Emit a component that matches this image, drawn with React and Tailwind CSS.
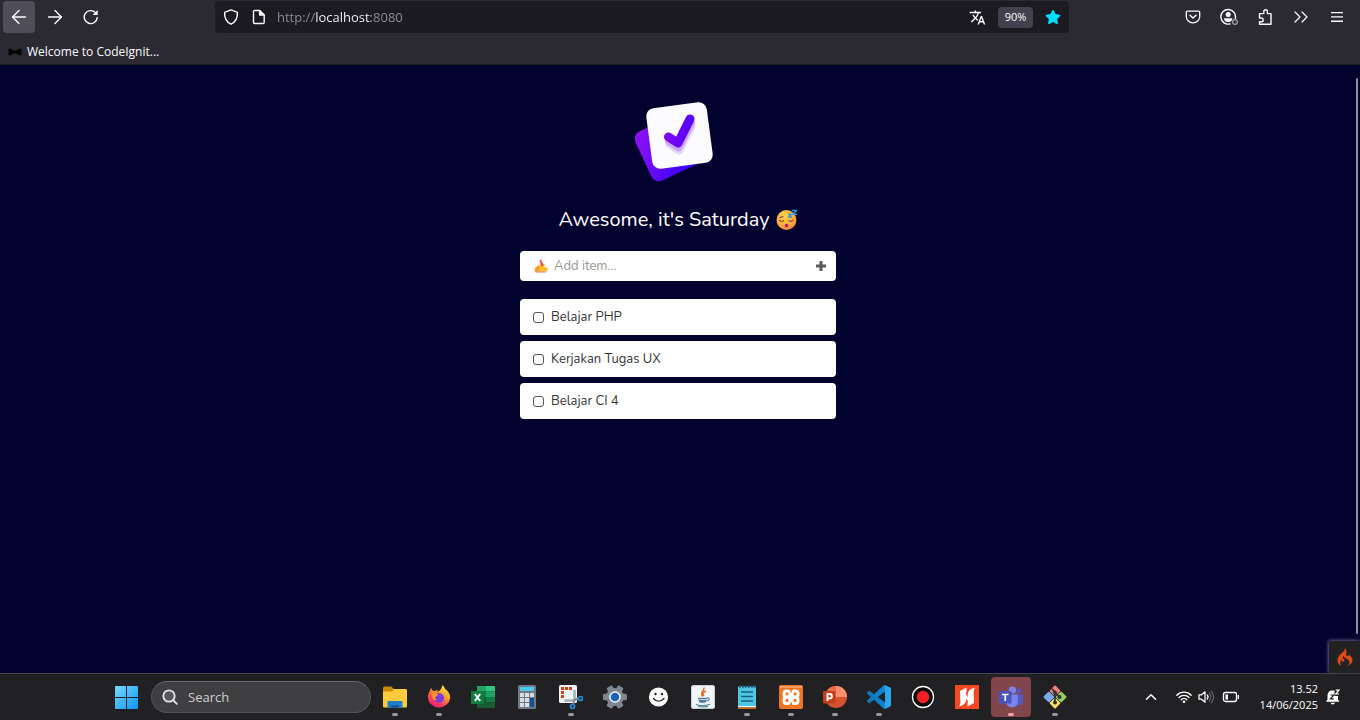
import { ArrowLeft, ArrowRight, ChevronsRight, ChevronUp } from "lucide-react";
import { FaStar } from "react-icons/fa6";
import { MdTranslate } from "react-icons/md";
import { SiCodeigniter } from "react-icons/si";

const line = { fill: "none", stroke: "currentColor", strokeLinecap: "round", strokeLinejoin: "round" };

function ToolButton({ label, active, children }) {
  return (
    <button
      type="button"
      aria-label={label}
      className={`flex size-8 shrink-0 items-center justify-center rounded text-[#fbfbfe] ${active ? "bg-[#4f4e58]" : "hover:bg-[#4f4e58]"}`}
    >
      {children}
    </button>
  );
}

function ReloadIcon() {
  return (
    <svg viewBox="0 0 16 16" className="size-4" {...line} strokeWidth="1.4">
      <path d="M14.2 8.6A6.5 6.5 0 1 1 12.4 3.6" />
      <path d="M14.6 1v5h-5z" fill="currentColor" stroke="none" />
    </svg>
  );
}

function ShieldIcon() {
  return (
    <svg viewBox="0 0 16 16" className="size-4" {...line} strokeWidth="1.4">
      <path d="M8 .9 14.4 3.3c.3 4.6-.6 9.2-6.4 11.9C2.2 12.5 1.3 7.9 1.6 3.3z" />
    </svg>
  );
}

function PageIcon() {
  return (
    <svg viewBox="0 0 16 16" className="size-4" {...line} strokeWidth="1.4">
      <path d="M3.5 1.5h5.3l4.400 4.400v7.400a1.200 1.200 0 0 1-1.200 1.200H3.700a1.200 1.200 0 0 1-1.200-1.200V2.500a1 1 0 0 1 1-1z" />
      <path d="M8.6 1.7v4.400H13z" fill="currentColor" />
    </svg>
  );
}

function PocketIcon() {
  return (
    <svg viewBox="0 0 16 16" className="size-4" {...line} strokeWidth="1.3">
      <path d="M2.5 2.200h11a1.200 1.200 0 0 1 1.200 1.200v4.100a6.700 6.300 0 0 1-13.400 0V3.400a1.200 1.200 0 0 1 1.200-1.200z" />
      <path d="M5 6.300 8 9l3-2.700" strokeWidth="1.5" />
    </svg>
  );
}

function AccountIcon() {
  return (
    <svg viewBox="0 0 18 18" className="size-[18px]" {...line} strokeWidth="1.4">
      <path d="M10 15.900A7.300 7.300 0 1 1 15.300 10.400" />
      <circle cx="8.2" cy="6.6" r="2.5" fill="currentColor" stroke="none" />
      <path d="M4 10.300h8.400c0 2-1.400 3.800-4.200 3.800S4 12.300 4 10.300z" fill="currentColor" stroke="none" />
      <circle cx="15" cy="14" r="2.3" stroke="#a5a4ad" strokeWidth="1.3" />
    </svg>
  );
}

function PuzzleIcon() {
  return (
    <svg viewBox="0 0 16 18" className="h-[18px] w-4" {...line} strokeWidth="1.4">
      <path d="M2.5 7.500V5.600h4.300V3.500a1.800 1.800 0 0 1 3.600 0v2.100h3.600v10.600H2.500v-2.400h1.800a1.900 1.900 0 0 0 0-3.800H2.500z" />
    </svg>
  );
}

function MenuIcon() {
  return (
    <svg viewBox="0 0 16 16" className="size-4" fill="currentColor">
      <path d="M2 3h12v1.300H2zM2 7.300h12v1.300H2zM2 11.600h12v1.300H2z" />
    </svg>
  );
}

function BowTieIcon() {
  return (
    <svg viewBox="0 0 14 8" className="h-2 w-[14px]" fill="#050505">
      <path d="M.4 1.500C.6.400 2 .4 3 .9l3 1.500h2l3-1.500c1-.5 2.400-.5 2.600.6v5c-.2 1.100-1.600 1.100-2.600.6L8 5.600H6L3 7.100c-1 .5-2.400.5-2.600-.6z" />
    </svg>
  );
}

function TodoLogo() {
  return (
    <svg viewBox="632 98 92 86" className="h-[86px] w-[92px]" role="img" aria-label="Todo logo">
      <defs>
        <linearGradient id="back" x1="0" y1="0" x2="1" y2="1">
          <stop offset="0" stopColor="#9812f5" />
          <stop offset="1" stopColor="#2500ff" />
        </linearGradient>
        <linearGradient id="tick" x1="0" y1="0" x2="1" y2="0">
          <stop offset="0" stopColor="#7a08ee" />
          <stop offset="1" stopColor="#5800ff" />
        </linearGradient>
      </defs>
      <rect x="641" y="121" width="54" height="54" rx="8" fill="url(#back)" transform="rotate(-25 668 148)" />
      <rect x="649" y="105" width="61" height="61" rx="8" fill="#fcfbfe" transform="rotate(-7.5 679.5 135.5)" />
      <g fill="none" strokeWidth="9" strokeLinecap="round" strokeLinejoin="round">
        <path d="m670 144 9 6 12-24" stroke="#e6d6fd" />
        <path d="m669.500 141 9 6 12-24" stroke="#c9a9fa" />
        <path d="m668.500 137 9.500 6 12-24" stroke="url(#tick)" />
      </g>
    </svg>
  );
}

function SleepyFace() {
  return (
    <svg viewBox="0 0 22 22" className="size-[22px]" role="img" aria-label="Sleeping face">
      <defs>
        <radialGradient id="face" cx=".4" cy=".3" r=".75">
          <stop offset="0" stopColor="#ffd24a" />
          <stop offset=".7" stopColor="#fba63a" />
          <stop offset="1" stopColor="#f2784b" />
        </radialGradient>
      </defs>
      <circle cx="10.5" cy="11" r="10" fill="url(#face)" />
      <g fill="none" stroke="#51313a" strokeWidth="1" strokeLinecap="round">
        <path d="M3.500 11.500q2 1.800 4.200.4M12.800 11.900q2.200 1.400 4.200-.4M4 8.500l3-.8" />
      </g>
      <ellipse cx="10.5" cy="16.5" rx="1.7" ry="1.8" fill="#b5126b" />
      <path d="M12 5.500h3.500l-3 2.500h3.500M16 1.500h4.800l-4 3.700h4.400" fill="none" stroke="#2d9be8" strokeWidth="1.400" strokeLinejoin="round" />
    </svg>
  );
}

function WritingHand() {
  return (
    <svg viewBox="0 0 14 14" className="size-[14px] shrink-0" aria-hidden="true">
      <path d="M2 8.500 6.500 5.500 10 4.800c1.300-.2 1.500 1 .5 1.600L8.800 7.600l4 .9c1.500.6 1.300 3.300-.5 3.900H5C2.500 12.400 1 10 2 8.500z" fill="#fbc02d" />
      <path d="M.4 11.500c.6-2.500 2-4.300 4.600-5.400l.5 3.700L4 12.800H1z" fill="#f9a02f" />
      <path d="m5.500 1 1.500-.5 2.600 5.300-.6 2.300-2-1z" fill="#f0554b" />
      <path d="M2 13h9.500" stroke="#f06a52" strokeWidth="1" strokeLinecap="round" />
    </svg>
  );
}

function WindowsIcon() {
  return (
    <svg viewBox="0 0 24 24" className="size-6">
      <defs>
        <linearGradient id="win" gradientUnits="userSpaceOnUse" x1="0" y1="0" x2="24" y2="24">
          <stop offset="0" stopColor="#7fdcff" />
          <stop offset="1" stopColor="#0a94f2" />
        </linearGradient>
      </defs>
      <path fill="url(#win)" d="M2 1H12V12H1V2a1 1 0 0 1 1-1zM13 1h10a1 1 0 0 1 1 1v10H13zM1 13h11v11H2a1 1 0 0 1-1-1zM13 13h11v10a1 1 0 0 1-1 1H13z" />
    </svg>
  );
}

function FolderArt() {
  return (
    <>
      <path d="M0 3.200C0 2 .8 1.500 1.800 1.500h6.500l2.500 2.500H22v5H0z" fill="#c98a0a" />
      <path d="M0 6.500h9l2-2.500h11.500c1 0 1.500.5 1.500 1.500v15.500c0 1-.5 1.500-1.500 1.500h-21C.5 22.500 0 22 0 21z" fill="#fdcb3b" />
      <path d="M4.500 22.500v-5c0-1 .8-1.500 1.800-1.500h11.400c1 0 1.800.5 1.800 1.500v5z" fill="#1b7fcc" />
      <path d="M8 22.500v-1.200c0-.6.400-.8 1-.8h6c.6 0 1 .2 1 .8v1.200z" fill="#0c4f8f" />
    </>
  );
}

function FirefoxArt() {
  return (
    <>
      <defs>
        <linearGradient id="fox" x1=".8" y1="0" x2=".2" y2="1">
          <stop offset="0" stopColor="#fff04a" />
          <stop offset=".4" stopColor="#ff9a27" />
          <stop offset=".7" stopColor="#ff4052" />
          <stop offset="1" stopColor="#e81783" />
        </linearGradient>
      </defs>
      <path d="M15.500 0c2 2 2.500 3.500 3 4.500 1-.3 1 .4 1 .4 2.500 2.100 3.700 5 3.700 8.100A11.300 11 0 0 1 .8 13c0-3 .8-5.500 2.400-7.500 0-1 .3-2 .8-2.500l1.500 2.500c1 0 2 .2 2.700.7 1-1.200 2-1.600 2.800-1.700-.8 1-1 2-.7 2.500C12.500 6 14.500 4.500 15.500 0z" fill="url(#fox)" />
      <circle cx="12" cy="13" r="5" fill="#7a3bdc" />
      <path d="M4.500 8c2 .8 3.500 1.200 7 1-.7 1.700-2.700 2-3.200 3.300-.4 1.500.6 2.500 2.200 2.700-2.500 1-4.700-.2-5.300-2.200z" fill="#ff9330" />
    </>
  );
}

function ExcelArt() {
  return (
    <>
      <path d="M6 1h9v5.500H6z" fill="#21a366" /><path d="M15 1h8q1 0 1 1v4.500h-9z" fill="#33c481" />
      <path d="M6 6.500h9V12H6z" fill="#107c41" /><path d="M15 6.500h9V12h-9z" fill="#21a366" />
      <path d="M6 12h9v5.500H6z" fill="#185c37" /><path d="M15 12h9v5.500h-9z" fill="#107c41" />
      <path d="M6 17.500h18V22q0 1-1 1H7q-1 0-1-1z" fill="#185c37" />
      <rect y="6" width="13" height="13" rx="1" fill="#107c41" />
      <path d="m3.800 9 5.400 7M9.200 9l-5.400 7" stroke="#fff" strokeWidth="2" />
    </>
  );
}

function CalculatorArt() {
  return (
    <>
      <rect x="3" y="0" width="18" height="24" rx="1.5" fill="#717b86" />
      <rect x="5" y="2" width="14" height="4" rx=".5" fill="#4cc8f5" />
      {[8, 13, 18].map((y) => (
        <g key={y} fill="#d7dde3">
          <rect x="5" y={y} width="4" height="4" /><rect x="10" y={y} width="4" height="4" />
        </g>
      ))}
      <rect x="15" y="8" width="4" height="4" fill="#d7dde3" />
      <rect x="15" y="13" width="4" height="9" fill="#164f96" />
    </>
  );
}

function SnippingArt() {
  return (
    <>
      <rect x="0" y="0" width="18" height="18" rx="1.5" fill="#f2f4f6" />
      <path d="M2 2h3v3H2zM6 2h3v3H6zM10 2h3v3h-3zM2 6h3v3H2zM2 10h3v3H2z" fill="#dd3c16" />
      <path d="M15.500 5v11M5.500 15.500H16" fill="none" stroke="#a4adb6" strokeWidth="2.5" />
      <path d="m14 19 1.500-4 4-1.500" fill="none" stroke="#7f8b96" strokeWidth="2" />
      <circle cx="21.5" cy="13.5" r="2" fill="none" stroke="#1a90dc" strokeWidth="1.7" />
      <circle cx="13.5" cy="21.5" r="2" fill="none" stroke="#1a90dc" strokeWidth="1.7" />
    </>
  );
}

function SettingsArt() {
  return (
    <>
      <g fill="#7d8791">
        {[30, 90, 150].map((a) => (
          <rect key={a} x="8.8" y="0" width="6.4" height="24" rx="1.5" transform={`rotate(${a} 12 12)`} />
        ))}
        <circle cx="12" cy="12" r="9" />
      </g>
      <circle cx="12" cy="12" r="5.8" fill="#f3f5f7" />
      <circle cx="12" cy="12" r="4.3" fill="#1566b4" />
    </>
  );
}

function SmileArt() {
  return (
    <>
      <circle cx="11.5" cy="12" r="9.6" fill="#f7f7f7" />
      <circle cx="8.5" cy="9" r="1.2" fill="#222" /><circle cx="15" cy="9" r="1.2" fill="#222" />
      <path d="M6.500 13.500q5 5.500 10.500 0" fill="none" stroke="#222" strokeWidth="1.2" strokeLinecap="round" />
    </>
  );
}

function JavaArt() {
  return (
    <>
      <rect width="24" height="24" rx="3" fill="#f3f6f8" />
      <rect x=".5" y=".5" width="23" height="23" rx="3" fill="none" stroke="#c3ced6" />
      <path d="M12.800 2.500c1.800 3-4.800 4.700-1.200 9M15 6c-3.500 1.500-4 2.800-2 5" fill="none" stroke="#ea6a1f" strokeWidth="1.5" />
      <path d="M7 12.800h9l-1 4.200c-1.500 1.200-5.500 1.200-7 0z" fill="#557f9b" />
      <path d="M16 13c3-.8 3 2.500-.5 3M5 19.500c3 1.500 10 1.500 14-.3M7 21.500c3 .6 7 .6 10-.2" fill="none" stroke="#557f9b" strokeWidth="1.2" />
      <path d="M8 14.500h7" stroke="#dce7ee" strokeWidth=".8" />
    </>
  );
}

function NotepadArt() {
  return (
    <>
      <path d="M3 1.500h18V21H3z" fill="#4fc5de" />
      <path d="M3 21h18v1.500H3z" fill="#f5f5f5" /><path d="M3 22.500h18V24H3z" fill="#c96a17" />
      <path d="M5 0v3M8 0v3M11 0v3M14 0v3M17 0v3M20 0v3" stroke="#155b78" strokeWidth="1.2" />
      <path d="M6 7h12M6 11.500h12M6 16h12" stroke="#126481" strokeWidth="1.4" />
    </>
  );
}

function XamppArt() {
  return (
    <>
      <rect width="24" height="24" rx="2" fill="#ee7623" />
      <path d="M1 1h22v2H1z" fill="#f59a5c" />
      <g fill="none" stroke="#fff" strokeWidth="3">
        <rect x="5" y="6" width="6" height="6" rx="2.5" />
        <rect x="13" y="6" width="6" height="6" rx="2.5" />
        <rect x="5" y="12.5" width="6" height="6" rx="2.5" />
        <rect x="13" y="12.5" width="6" height="6" rx="2.5" />
      </g>
      <path d="M8 10.500h8v3.500H8z" fill="#fff" />
      <path d="M12 3v4.500M12 17v4.500" stroke="#ee7623" strokeWidth="1.4" />
    </>
  );
}

function PowerPointArt() {
  return (
    <>
      <circle cx="13" cy="12" r="11" fill="#d35230" />
      <path d="M13 1a11 11 0 0 0-11 11h11z" fill="#ed6c47" /><path d="M13 1a11 11 0 0 1 11 11H13z" fill="#ff8f6b" />
      <rect y="6" width="12.5" height="12.5" rx="1" fill="#c43e1c" />
      <path d="M4.500 16V9h2.200a2.100 2.100 0 0 1 0 4.400H4.500" fill="none" stroke="#fff" strokeWidth="1.9" />
    </>
  );
}

function CodeArt() {
  return (
    <>
      <defs>
        <linearGradient id="code" x1="0" y1="0" x2="1" y2="0">
          <stop offset="0" stopColor="#0d78bd" />
          <stop offset=".72" stopColor="#0f85ce" />
          <stop offset=".76" stopColor="#2ba4ee" />
          <stop offset="1" stopColor="#2fa8f2" />
        </linearGradient>
      </defs>
      <path
        fill="url(#code)"
        d="M23.150 2.587L18.210.210a1.494 1.494 0 0 0-1.705.290l-9.460 8.630-4.120-3.128a.999.999 0 0 0-1.276.057L.327 7.261A1 1 0 0 0 .326 8.740L3.899 12 .326 15.260a1 1 0 0 0 .001 1.479L1.650 17.940a.999.999 0 0 0 1.276.057l4.120-3.128 9.460 8.630a1.492 1.492 0 0 0 1.704.290l4.942-2.377A1.500 1.500 0 0 0 24 20.060V3.939a1.500 1.500 0 0 0-.850-1.352zm-5.146 14.861L10.826 12l7.178-5.448v10.896z"
      />
    </>
  );
}

function RecordArt() {
  return (
    <>
      <circle cx="12" cy="12" r="10.5" fill="#070707" stroke="#fff" strokeWidth="1.3" />
      <circle cx="12" cy="12" r="6.2" fill="#f32222" />
    </>
  );
}

function NitroArt() {
  return (
    <>
      <path d="M0 0h24v24H0z" fill="#f4481f" />
      <path d="M5 6 11.500 2.500c.8 3-.8 5.500-.5 8 .2 1.500.5 3 .3 4.500-.3 3-3 5.500-7.300 6.500 1.500-2.500 1.500-4.500 1.300-7z" fill="#fff" />
      <path d="M20 2.500c-4 .8-7 3.500-7.300 6.500-.2 1.500.1 3 .3 4.500.3 2.500-.8 5-.5 8L19 18l-.3-8.500c-.2-2.500-.2-4.500 1.300-7z" fill="#fff" />
      <path d="m9 9 5.500 7" stroke="#fff" strokeWidth="2.5" />
    </>
  );
}

function TeamsArt() {
  return (
    <>
      <circle cx="13.5" cy="5" r="3.6" fill="#7b83eb" /><circle cx="20" cy="6" r="2.4" fill="#5059c9" />
      <path d="M16 9.500h7q1 0 1 1v5.500a4.500 4.500 0 0 1-8 2.500z" fill="#5059c9" />
      <path d="M8 9.500h10q1 0 1 1v6a6 6 0 0 1-12 0z" fill="#7b83eb" />
      <rect y="6" width="12.5" height="12.5" rx="1" fill="#4b53bc" />
      <path d="M3 9.500h6.500M6.250 9.500V16" stroke="#fff" strokeWidth="1.7" />
    </>
  );
}

function GitArt() {
  return (
    <>
      <g transform="rotate(45 12 12)">
        <rect x="3.6" y="3.6" width="8.1" height="8.1" rx="1" fill="#f47c7c" /><rect x="12.3" y="3.6" width="8.1" height="8.1" rx="1" fill="#8ed160" />
        <rect x="3.6" y="12.3" width="8.1" height="8.1" rx="1" fill="#7aa9ee" /><rect x="12.3" y="12.3" width="8.1" height="8.1" rx="1" fill="#fbe071" />
      </g>
      <path d="M8.500 3.500 12 7v11M12 7.500l4.500 4.500" fill="none" stroke="#30312d" strokeWidth="1.7" />
      <g fill="#30312d"><circle cx="12" cy="7.5" r="1.9" /><circle cx="12" cy="17.5" r="2" /><circle cx="16.5" cy="12" r="2" /></g>
    </>
  );
}

const apps = [
  { name: "File Explorer", Art: FolderArt, open: true },
  { name: "Firefox", Art: FirefoxArt, open: true },
  { name: "Excel", Art: ExcelArt },
  { name: "Calculator", Art: CalculatorArt },
  { name: "Snipping Tool", Art: SnippingArt, open: true },
  { name: "Settings", Art: SettingsArt },
  { name: "Smile", Art: SmileArt },
  { name: "Java", Art: JavaArt },
  { name: "Notepad", Art: NotepadArt, open: true },
  { name: "XAMPP", Art: XamppArt, open: true },
  { name: "PowerPoint", Art: PowerPointArt, open: true },
  { name: "Visual Studio Code", Art: CodeArt, open: true },
  { name: "Recorder", Art: RecordArt },
  { name: "Nitro", Art: NitroArt },
  { name: "Teams", Art: TeamsArt, open: true, alert: true },
  { name: "Git", Art: GitArt, open: true },
];

function BrowserChrome() {
  return (
    <header className="border-b border-[#1b1a21] bg-[#2b2a33] font-['Open_Sans',sans-serif] text-[#fbfbfe]">
      <div className="flex items-center pt-px pr-[7px] pl-[3px]">
        <nav className="flex gap-1" aria-label="History">
          <ToolButton label="Back" active><ArrowLeft size={22} strokeWidth={1.5} /></ToolButton>
          <ToolButton label="Forward"><ArrowRight size={22} strokeWidth={1.5} /></ToolButton>
          <ToolButton label="Reload"><ReloadIcon /></ToolButton>
        </nav>
        <div className="mx-[108px] flex h-8 flex-1 items-center rounded bg-[#1c1b22] px-2">
          <ShieldIcon />
          <span className="ml-3"><PageIcon /></span>
          <input
            aria-label="Address"
            defaultValue="http://localhost:8080"
            className="ml-2.5 min-w-0 flex-1 bg-[linear-gradient(90deg,#8f8f98_39px,#fbfbfe_39px,#fbfbfe_94px,#8f8f98_94px)] bg-clip-text pt-0.5 text-[13px] text-transparent outline-none"
          />
          <button type="button" aria-label="Translate"><MdTranslate size={17} /></button>
          <button type="button" className="mx-3 h-[21px] w-[35px] rounded-sm bg-[#42414d] text-[11px]">90%</button>
          <button type="button" aria-label="Bookmark"><FaStar size={16} className="text-[#00ddff]" /></button>
        </div>
        <div className="flex gap-1">
          <ToolButton label="Pocket"><PocketIcon /></ToolButton>
          <ToolButton label="Account"><AccountIcon /></ToolButton>
          <ToolButton label="Extensions"><PuzzleIcon /></ToolButton>
          <ToolButton label="More tools"><ChevronsRight size={24} strokeWidth={1.2} /></ToolButton>
          <ToolButton label="Menu"><MenuIcon /></ToolButton>
        </div>
      </div>
      <div className="flex h-[31px] items-center px-2 pt-1.5">
        <a href="#" className="flex items-center gap-[5px] text-xs"><BowTieIcon />Welcome to CodeIgnit...</a>
      </div>
    </header>
  );
}

function TodoPage() {
  return (
    <main className="relative flex flex-1 flex-col items-center overflow-hidden bg-[#02022e] pt-[33px] pr-1 font-['Nunito','Open_Sans',sans-serif]">
      <TodoLogo />
      <h1 className="mt-5 flex h-8 items-center gap-1.5 text-xl text-white">
        Awesome, it's Saturday
        <SleepyFace />
      </h1>
      <form className="mt-[15px] flex h-[30px] w-[316px] items-center rounded bg-white px-2.5" onSubmit={(e) => e.preventDefault()}>
        <span className="ml-1"><WritingHand /></span>
        <input aria-label="Add item" placeholder="Add item..." className="ml-1.5 min-w-0 flex-1 pt-0.5 text-[13px] text-[#333] outline-none placeholder:text-[#989898]" />
        <button type="submit" aria-label="Add" className="text-[#5b5b5f]">
          <svg viewBox="0 0 10 10" className="size-2.5" fill="currentColor">
            <path d="M3.500 0h3v3.500H10v3H6.500V10h-3V6.500H0v-3h3.500z" />
          </svg>
        </button>
      </form>
      <ul className="mt-[18px] flex w-[316px] flex-col gap-1.5">
        {["Belajar PHP", "Kerjakan Tugas UX", "Belajar CI 4"].map((item) => (
          <li key={item}>
            <label className="flex h-9 items-center gap-[7px] rounded bg-white pl-[13px] text-[13px] text-[#363636]">
              <input type="checkbox" className="size-[11px] appearance-none rounded-[3px] border border-[#55555a] checked:bg-[#5800ff]" />
              <span className="pt-0.5">{item}</span>
            </label>
          </li>
        ))}
      </ul>
      <div className="absolute top-[13px] right-[2px] bottom-[39px] w-0.5 rounded bg-[#8f8f94]" />
      <button type="button" aria-label="CodeIgniter toolbar" className="absolute right-0 bottom-0 flex h-8 w-[31px] items-center justify-center bg-[#222] text-[#dd4814] shadow-[0_0_4px_#8f8fb5]">
        <SiCodeigniter size={18} />
      </button>
    </main>
  );
}

function Taskbar() {
  return (
    <footer className="flex h-[47px] items-center border-t border-[#45454c] bg-[#212124] pr-[19px] pl-[104px] font-['Open_Sans',sans-serif] text-white">
      <button type="button" aria-label="Start" className="flex h-10 w-11 items-center justify-center"><WindowsIcon /></button>
      <label className="mr-0.5 ml-[3px] flex h-8 w-[220px] items-center rounded-full border border-[#525254] border-t-[#69696b] bg-[#3f3f41] pl-2.5">
        <svg viewBox="0 0 16 16" className="size-4 shrink-0 text-[#e3e5e7]" {...line} strokeWidth="1.8">
          <circle cx="7" cy="7" r="5.7" fill="#58595c" /><path d="m11.200 11.200 3.600 3.600" />
        </svg>
        <input type="search" aria-label="Search" placeholder="Search" className="ml-2.5 w-36 pt-0.5 text-[13px] outline-none placeholder:text-[#d0d0d0]" />
      </label>
      {apps.map(({ name, Art, open, alert }) => (
        <div key={name} className="flex w-11 shrink-0 justify-center">
          <button type="button" aria-label={name} className={`flex h-10 w-10 flex-col items-center rounded pt-2 ${alert ? "bg-[#80464b]" : ""}`}>
            <svg viewBox="0 0 24 24" className="size-6"><Art /></svg>
            {open && <span className={`mt-1 h-[3px] w-1.5 rounded-full ${alert ? "bg-[#ff9ba5]" : "bg-[#98989b]"}`} />}
          </button>
        </div>
      ))}
      <div className="ml-auto flex items-center">
        <button type="button" aria-label="Hidden icons"><ChevronUp size={18} strokeWidth={2} /></button>
        <button type="button" aria-label="Network, sound and battery" className="ml-4 flex items-center gap-1.5">
          <svg viewBox="0 0 16 16" className="size-4" {...line} strokeWidth="1.3">
            <path d="M.8 6.200a10.200 10.200 0 0 1 14.400 0M3 8.500a7.100 7.100 0 0 1 10 0M5.200 10.700a4 4 0 0 1 5.600 0" />
            <circle cx="8" cy="12.8" r="1.3" fill="currentColor" stroke="none" />
          </svg>
          <svg viewBox="0 0 16 16" className="size-4" {...line} strokeWidth="1.2">
            <path d="M1 5.800h2.500L7 2.800v10.400l-3.500-3H1zM9.200 6a3 3 0 0 1 0 4" />
            <path d="M11.200 4a6 6 0 0 1 0 8M13.200 2.200a8.500 8.500 0 0 1 0 11.600" stroke="#65656a" />
          </svg>
          <svg viewBox="0 0 18 16" className="ml-0.5 h-4 w-[18px]" {...line} strokeWidth="1.3">
            <rect x="1.5" y="3.5" width="13" height="9" rx="2" /><path d="M16.300 6.500v3" />
            <path d="M3.500 5.500h2.500v5H3.500z" fill="currentColor" stroke="none" />
          </svg>
        </button>
        <time className="ml-5 text-right text-[11px] leading-4">13.52<br />14/06/2025</time>
        <button type="button" aria-label="Notifications" className="ml-[7px]">
          <svg viewBox="0 0 16 16" className="size-4">
            <path d="M1 12.800 2.500 10.500V6.500C2.500 3.500 4.300 1.500 7 1.500h2.500v5.500H13v3.500l1.500 2.300zM5.500 13.800h4.500a2.300 2.300 0 0 1-4.500 0z" fill="#fff" />
            <path d="M5.500 6h3.300L5.500 9.800h3.300" fill="none" stroke="#212124" strokeWidth="1.2" />
            <path d="M10.800 1.200h3.200l-3.200 3.800h3.200" fill="none" stroke="#fff" strokeWidth="1.2" />
          </svg>
        </button>
      </div>
    </footer>
  );
}

export default function App() {
  return (
    <div className="flex min-h-screen flex-col">
      <BrowserChrome />
      <TodoPage />
      <Taskbar />
    </div>
  );
}
